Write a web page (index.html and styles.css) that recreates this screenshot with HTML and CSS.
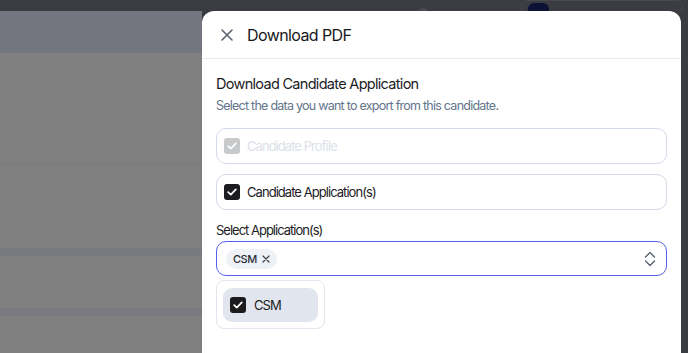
FILE: index.html
```html
<!DOCTYPE html>
<html lang="en">
<head>
    <meta charset="UTF-8">
    <meta name="viewport" content="width=device-width, initial-scale=1.0">
    <title>Download PDF</title>
    <link rel="stylesheet" href="styles.css">
</head>
<body>
    <div class="topbar">
        <span class="top-dot"></span>
        <div class="top-user">
            <span class="top-avatar"></span>
        </div>
    </div>

    <div class="main">
        <div class="backdrop">
            <div class="bd-head"></div>
            <div class="bd-row bd-row-1"></div>
            <div class="bd-row bd-row-2"></div>
            <div class="bd-band"></div>
            <div class="bd-row bd-row-3"></div>
            <div class="bd-band"></div>
            <div class="bd-row bd-row-4"></div>
        </div>

        <div class="panel">
            <div class="panel-header">
                <button class="close-btn" aria-label="Close">
                    <svg width="14" height="14" viewBox="0 0 14 14" fill="none">
                        <path d="M2 2L12 12M12 2L2 12" stroke="#5b6372" stroke-width="1.6" stroke-linecap="round"/>
                    </svg>
                </button>
                <h1>Download PDF</h1>
            </div>

            <div class="panel-body">
                <h2>Download Candidate Application</h2>
                <p class="subtitle">Select the data you want to export from this candidate.</p>

                <label class="option disabled">
                    <span class="check check-disabled">
                        <svg width="10" height="8" viewBox="0 0 10 8" fill="none"><path d="M1.2 4.2L3.8 6.6L8.8 1.4" stroke="#fff" stroke-width="1.7" stroke-linecap="round" stroke-linejoin="round"/></svg>
                    </span>
                    Candidate Profile
                </label>

                <label class="option">
                    <span class="check">
                        <svg width="10" height="8" viewBox="0 0 10 8" fill="none"><path d="M1.2 4.2L3.8 6.6L8.8 1.4" stroke="#fff" stroke-width="1.7" stroke-linecap="round" stroke-linejoin="round"/></svg>
                    </span>
                    Candidate Application(s)
                </label>

                <div class="field-label">Select Application(s)</div>
                <div class="select">
                    <span class="chip">CSM
                        <svg width="8" height="8" viewBox="0 0 8 8" fill="none"><path d="M1 1L7 7M7 1L1 7" stroke="#3a3f4a" stroke-width="1.2" stroke-linecap="round"/></svg>
                    </span>
                    <svg class="chevrons" width="12" height="16" viewBox="0 0 12 16" fill="none">
                        <path d="M1.5 6L6 1.5L10.5 6M1.5 10L6 14.5L10.5 10" stroke="#5b6372" stroke-width="1.4" stroke-linecap="round" stroke-linejoin="round"/>
                    </svg>
                </div>

                <div class="menu">
                    <div class="menu-item">
                        <span class="check">
                            <svg width="10" height="8" viewBox="0 0 10 8" fill="none"><path d="M1.2 4.2L3.8 6.6L8.8 1.4" stroke="#fff" stroke-width="1.7" stroke-linecap="round" stroke-linejoin="round"/></svg>
                        </span>
                        CSM
                    </div>
                </div>
            </div>
        </div>

        <div class="edge"></div>
    </div>
</body>
</html>
```

FILE: styles.css
```css
body, html {
    margin: 0;
    padding: 0;
    height: 100%;
    overflow: hidden;
    font-family: Inter, "Noto Sans", sans-serif;
    background: #3b3c41;
}
.topbar {
    height: 11px;
    background: #3b3c41;
    display: flex;
    align-items: flex-end;
    padding-left: 418px;
    box-sizing: border-box;
    overflow: hidden;
}
.top-dot {
    width: 10px;
    height: 10px;
    margin-bottom: -7px;
    border-radius: 50%;
    background: #4b4c51;
}
.top-user {
    margin-left: 93px;
    width: 154px;
    height: 12px;
    margin-bottom: -3px;
    border: 1px solid #48494e;
    border-radius: 8px;
    display: flex;
    align-items: flex-end;
    padding-left: 6px;
}
.top-avatar {
    width: 21px;
    height: 8px;
    margin-bottom: 2px;
    border-radius: 6px 6px 0 0;
    background: #0c1236;
}
.main {
    display: flex;
    height: 342px;
}
.backdrop {
    width: 202px;
    display: flex;
    flex-direction: column;
    background: #808080;
}
.bd-head {
    height: 42px;
    background: #73767e;
}
.bd-row-1 {
    height: 111px;
    border-bottom: 1px solid #7a7a7c;
}
.bd-row-2 {
    height: 83px;
}
.bd-band {
    height: 8px;
    background: #7a7b80;
    border-top: 1px solid #77787c;
    box-sizing: border-box;
}
.bd-row-3 {
    height: 52px;
}
.bd-row-4 {
    flex: 1;
}
.panel {
    width: 479px;
    background: #ffffff;
    border-radius: 12px 12px 0 0;
}
.edge {
    flex: 1;
    background: #3b3c41;
}
.panel-header {
    height: 48px;
    display: flex;
    align-items: center;
    padding-left: 18px;
    border-bottom: 1px solid #e6e9ef;
    box-sizing: border-box;
}
.close-btn {
    background: none;
    border: none;
    padding: 0;
    width: 14px;
    height: 14px;
    display: flex;
    cursor: pointer;
}
.panel-header h1 {
    margin: 0 0 0 13px;
    font-size: 16px;
    font-weight: 400;
    color: #18181b;
    letter-spacing: -0.6px;
}
.panel-body {
    padding: 15px 14px 0 14px;
}
.panel-body h2 {
    margin: 0;
    font-size: 14.5px;
    font-weight: 400;
    color: #1c1c1f;
    line-height: 20px;
    letter-spacing: -0.7px;
}
.subtitle {
    margin: 3px 0 13px 0;
    font-size: 12.5px;
    color: #64748b;
    line-height: 18px;
    letter-spacing: -0.75px;
}
.option {
    display: flex;
    align-items: center;
    gap: 7px;
    height: 36px;
    padding: 0 7px;
    border: 1px solid #d3dbe8;
    border-radius: 10px;
    margin-bottom: 10px;
    font-size: 13px;
    color: #1c1c1f;
    letter-spacing: -0.95px;
    box-sizing: border-box;
}
.option.disabled {
    color: #dde2ea;
}
.check {
    width: 16px;
    height: 16px;
    border-radius: 3px;
    background: #1c1c1f;
    display: flex;
    align-items: center;
    justify-content: center;
    flex-shrink: 0;
}
.check-disabled {
    background: #c8c9cb;
}
.field-label {
    margin-top: 11px;
    font-size: 13px;
    color: #1c1c1f;
    line-height: 18px;
    letter-spacing: -1px;
}
.select {
    margin-top: 2px;
    height: 35px;
    border: 1.5px solid #5361ee;
    border-radius: 10px;
    display: flex;
    align-items: center;
    justify-content: space-between;
    padding: 0 10px 0 9px;
    box-sizing: border-box;
}
.chip {
    display: flex;
    align-items: center;
    gap: 5px;
    height: 20px;
    padding: 0 7px 0 7px;
    background: #eef1f6;
    border-radius: 10px;
    font-size: 11px;
    font-weight: 500;
    color: #2a2e37;
    letter-spacing: -0.5px;
}
.menu {
    margin-top: 4px;
    width: 109px;
    height: 49px;
    border: 1px solid #e2e7ef;
    border-radius: 8px;
    padding: 7px 6px;
    box-sizing: border-box;
}
.menu-item {
    height: 34px;
    background: #e1e6ee;
    border-radius: 9px;
    display: flex;
    align-items: center;
    gap: 8px;
    padding-left: 7px;
    font-size: 13px;
    color: #1c1c1f;
    letter-spacing: -0.9px;
}
```
